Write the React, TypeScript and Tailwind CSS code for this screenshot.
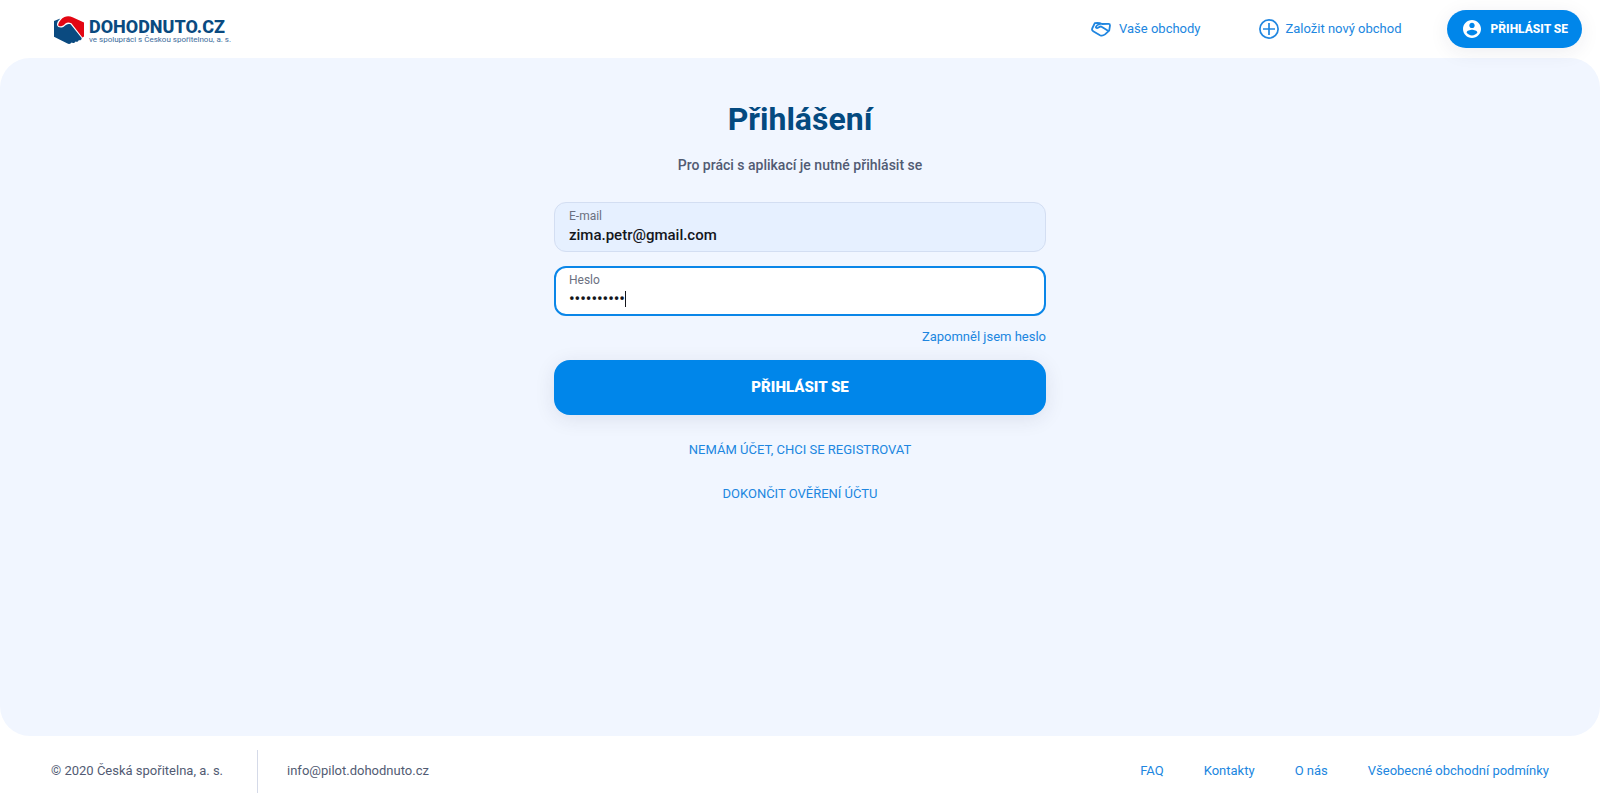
import React, { useState } from "react";
import { clsx } from "clsx";

// ── Static content ────────────────────────────────────────────────────────────

const FOOTER_LINKS = ["FAQ", "Kontakty", "O nás", "Všeobecné obchodní podmínky"];

// ── Icons ─────────────────────────────────────────────────────────────────────

function LogoMark() {
  return (
    <svg viewBox="0 0 30 28" className="w-[30px] h-7 shrink-0" aria-hidden="true">
      <path
        fill="#e30613"
        d="M4.2 8.4 C5 5.6 7.4 2.3 10.5 .9 C13 0 16 0 18.5 1.2 L30 6.4 V20.5 L28.4 21.6 L17.4 7.2 C15.4 6.4 13.4 6.2 11.8 7.2 C10.2 8.4 9.2 10 7.2 10.2 C5.4 10.4 4 9.8 4.2 8.4 Z"
      />
      <path
        fill="#0a4a80"
        d="M0 5 L6.4 2.6 C4.4 4.6 2.8 6.6 3 9 C3.6 12 8.2 12 10 10.4 C12 8.6 13.6 7.4 16.6 8.2 L27.6 22 C28 23.6 26.2 24.8 24.8 24 C24.6 25.6 22.6 26.4 21.4 25.4 C20.8 27 18.8 27.6 17.6 26.6 C16.6 28.2 14.4 28.2 13 27.2 L0 20.8 Z"
      />
    </svg>
  );
}

function HandshakeIcon() {
  return (
    <svg
      viewBox="0 0 20 15"
      className="w-5 h-[15px] shrink-0"
      fill="none"
      stroke="currentColor"
      strokeWidth="1.8"
      strokeLinejoin="round"
      strokeLinecap="round"
      aria-hidden="true"
    >
      <path d="M3.8 1.2 C6 .9 9 1 11 2 L17.6 1.9 C18.6 1.9 19 2.5 19 3.4 L18.2 8.6 L14 12.4 C12.2 13.8 10.6 14 9 13.2 L2.2 9.2 C1 8.5 .8 7.5 1.2 6.5 Z" />
      <path d="M9 2 C6.8 2.6 5.2 3.8 4.8 5.3 C5.2 6.5 7 6.2 8 5.2 C9 4.4 10.2 4.4 11 5 L17 8.8" />
    </svg>
  );
}

function PlusCircleIcon() {
  return (
    <svg
      viewBox="0 0 20 20"
      className="w-5 h-5 shrink-0"
      fill="none"
      stroke="currentColor"
      strokeWidth="1.7"
      aria-hidden="true"
    >
      <circle cx="10" cy="10" r="9.1" />
      <path d="M10 4 V16 M4 10 H16" />
    </svg>
  );
}

function AccountIcon() {
  return (
    <svg viewBox="2 2 20 20" className="w-[18px] h-[18px] shrink-0" fill="currentColor" aria-hidden="true">
      <path d="M12 2C6.48 2 2 6.48 2 12s4.48 10 10 10 10-4.48 10-10S17.52 2 12 2zm0 3c1.66 0 3 1.34 3 3s-1.34 3-3 3-3-1.34-3-3 1.34-3 3-3zm0 14.2c-2.5 0-4.71-1.28-6-3.22.03-1.99 4-3.08 6-3.08 1.99 0 5.97 1.09 6 3.08-1.29 1.94-3.5 3.22-6 3.22z" />
    </svg>
  );
}

// ── Form field ────────────────────────────────────────────────────────────────

// advance width of one masked character at 16px
const DOT_WIDTH = 5.6;

interface FieldProps {
  id: string;
  label: string;
  type: "email" | "password";
  value: string;
  autoFocus?: boolean;
  onChange: (value: string) => void;
}

function Field({ id, label, type, value, autoFocus, onChange }: FieldProps) {
  const [focused, setFocused] = useState(Boolean(autoFocus));
  const masked = type === "password";

  return (
    <div
      className={clsx(
        "h-[50px] rounded-xl",
        focused ? "border-2 border-[#0a86e8] px-[13px] pt-[5px]" : "border border-[#d3def2] px-[14px] pt-[6px]",
        masked ? "bg-white" : "bg-[#e6f0ff]"
      )}
    >
      <label htmlFor={id} className="block text-xs leading-[14px] text-[#6b7080]">
        {label}
      </label>
      <div className="relative">
        <input
          id={id}
          type={type}
          value={value}
          autoFocus={autoFocus}
          onFocus={() => setFocused(true)}
          onBlur={() => setFocused(false)}
          onChange={(e) => onChange(e.target.value)}
          className={clsx(
            "block w-full h-6 bg-transparent font-medium text-[#14161c] outline-none",
            masked ? "text-base caret-transparent" : "text-[15px]"
          )}
        />
        {masked && focused && (
          <span
            className="absolute top-1 w-px h-4 bg-[#14161c]"
            style={{ left: Math.round(value.length * DOT_WIDTH) }}
          />
        )}
      </div>
    </div>
  );
}

// ── Header ────────────────────────────────────────────────────────────────────

function Header() {
  return (
    <header className="relative z-10 flex items-center justify-between h-[58px] pl-[54px] pr-[18px]">
      <a href="#" className="flex items-center gap-[5px] pt-0.5">
        <LogoMark />
        <span className="flex flex-col pt-[3px]">
          <span className="text-lg leading-4 font-extrabold text-[#0a4a80]">DOHODNUTO.CZ</span>
          <span className="text-[8px] leading-[10px] text-[#3d6c9c]">
            ve spolupráci s Českou spořitelnou, a. s.
          </span>
        </span>
      </a>

      <nav className="flex items-center text-[13px] text-[#2086e0]">
        <a href="#" className="flex items-center gap-2 mr-[58px]">
          <HandshakeIcon />
          Vaše obchody
        </a>
        <a href="#" className="flex items-center gap-[7px] mr-[45px]">
          <PlusCircleIcon />
          Založit nový obchod
        </a>
        <button
          type="button"
          className="flex items-center gap-[10px] h-[38px] pl-4 pr-[14px] rounded-full bg-[#0086ea] text-white text-xs font-extrabold shadow-[0_4px_20px_rgba(40,40,80,0.08)]"
        >
          <AccountIcon />
          PŘIHLÁSIT SE
        </button>
      </nav>
    </header>
  );
}

// ── Footer ────────────────────────────────────────────────────────────────────

function Footer() {
  return (
    <footer className="flex items-center justify-between h-[70px] px-[51px] text-[13px]">
      <div className="flex items-center text-[#525b73]">
        <span className="flex items-center h-[43px] pr-[34px] mr-[29px] border-r border-[#d5dae8]">
          © 2020 Česká spořitelna, a. s.
        </span>
        <span>info@pilot.dohodnuto.cz</span>
      </div>
      <nav className="flex gap-10 text-[#2086e0]">
        {FOOTER_LINKS.map((label) => (
          <a key={label} href="#">
            {label}
          </a>
        ))}
      </nav>
    </footer>
  );
}

// ── Page ──────────────────────────────────────────────────────────────────────

export default function App() {
  const [email, setEmail] = useState("zima.petr@gmail.com");
  const [password, setPassword] = useState("heslo12345");

  return (
    <div className="flex flex-col min-h-screen bg-white font-['Roboto',sans-serif]">
      <Header />

      <main className="flex-1 rounded-[30px] bg-[#f1f6ff] px-6 pt-10">
        <form
          className="flex flex-col w-full max-w-[492px] mx-auto"
          onSubmit={(e) => e.preventDefault()}
        >
          <h1 className="text-center text-[32px] leading-[42px] font-bold text-[#044a80]">Přihlášení</h1>
          <p className="mt-[15px] mb-[27px] text-center text-sm leading-5 font-medium text-[#525b73]">
            Pro práci s aplikací je nutné přihlásit se
          </p>

          <div className="flex flex-col gap-[14px]">
            <Field id="email" label="E-mail" type="email" value={email} onChange={setEmail} />
            <Field id="password" label="Heslo" type="password" value={password} autoFocus onChange={setPassword} />
          </div>

          <a href="#" className="self-end mt-[11px] text-[13px] leading-5 text-[#2086e0]">
            Zapomněl jsem heslo
          </a>

          <button
            type="submit"
            className="h-[55px] mt-[13px] rounded-2xl bg-[#0086ea] text-white text-[15px] font-black shadow-[0_4px_20px_rgba(40,40,80,0.1)]"
          >
            PŘIHLÁSIT SE
          </button>

          <div className="flex flex-col items-center gap-6 mt-[25px] text-[13px] leading-5 text-[#2086e0]">
            <a href="#">NEMÁM ÚČET, CHCI SE REGISTROVAT</a>
            <a href="#">DOKONČIT OVĚŘENÍ ÚČTU</a>
          </div>
        </form>
      </main>

      <Footer />
    </div>
  );
}
